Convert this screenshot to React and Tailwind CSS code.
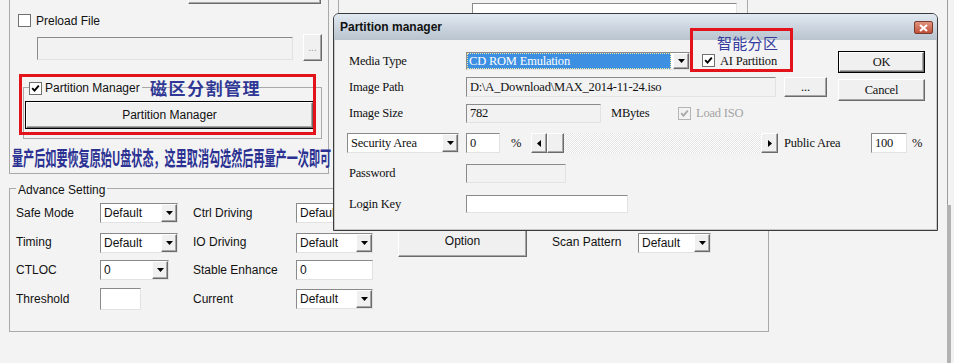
import React from "react";

const raised =
  "border border-t-white border-l-white border-r-[#6b6b6b] border-b-[#6b6b6b] bg-[#f0f0f0] shadow-[inset_-1px_-1px_0_#a6a6a6]";
const sunken =
  "border border-t-[#8a8a8a] border-l-[#8a8a8a] border-r-[#e2e2e2] border-b-[#e2e2e2]";

function Check({ checked, disabled }) {
  return (
    <span
      className={`inline-flex w-[13px] h-[13px] shrink-0 items-center justify-center border ${
        disabled ? "border-[#b4b4b4] bg-[#f3f3f3]" : "border-[#707070] bg-white"
      }`}
    >
      {checked && (
        <svg width="9" height="9" viewBox="0 0 9 9">
          <path d="M1.2 4.2l2.3 2.4L7.8 1.6" stroke={disabled ? "#a8a8a8" : "#000"} strokeWidth="1.9" fill="none" />
        </svg>
      )}
    </span>
  );
}

function Arrow() {
  return (
    <span className={`w-[16px] h-full flex items-center justify-center ${raised}`}>
      <svg width="7" height="4" viewBox="0 0 7 4">
        <path d="M0 0h7L3.5 4z" fill="#000" />
      </svg>
    </span>
  );
}

function Select({ w, value, serif }) {
  return (
    <div className={`flex h-[20px] ${w} bg-white items-center ${sunken}`}>
      <span className={`flex-1 pl-[3px] whitespace-nowrap overflow-hidden ${serif ? "text-[12.5px]" : "text-[12px]"}`}>{value}</span>
      <Arrow />
    </div>
  );
}

function Box({ w, h, value, dis }) {
  return (
    <div className={`${w} ${h} flex items-center pl-[3px] whitespace-nowrap overflow-hidden ${sunken} ${dis ? "bg-[#f2f2f2]" : "bg-white"}`}>
      {value}
    </div>
  );
}

function Lbl({ children }) {
  return <div className="w-[119px] pl-[2px] shrink-0">{children}</div>;
}

export default function App() {
  return (
    <div className="relative w-[954px] h-[363px] overflow-hidden bg-[#f3f3f3] font-['Liberation_Sans',Arial,sans-serif] text-[12px] text-[#111]">
      <div className="flex h-full">
        <div className="w-[947px] flex flex-col">
          <div className="flex h-[174px] items-start">
            {/* left group */}
            <div className="ml-[9px] w-[320px] h-[174px] border-x border-b border-[#a9a9a9] flex flex-col">
              <div className="-mt-[18px] h-[22px] flex items-center">
                <div className="w-[178px] pl-[8px] flex items-center gap-[5px]">
                  <Check />
                  <span>Disk Type (Default)</span>
                </div>
                <div className={`w-[133px] h-[22px] ${raised}`} />
              </div>
              <div className="mt-[10px] h-[13px] pl-[8px] flex items-center gap-[5px]">
                <Check />
                <span>Preload File</span>
              </div>
              <div className="mt-[7px] flex items-start">
                <div className={`ml-[27px] mt-[3px] w-[256px] h-[23px] bg-[#f2f2f2] ${sunken}`} />
                <div className={`ml-[10px] w-[19px] h-[27px] flex items-center justify-center text-[#9a9a9a] text-[10px] ${raised}`}>...</div>
              </div>
              <div className="mt-[26px] ml-[13px] w-[299px] h-[52px] border border-[#a9a9a9] relative">
                <div className="absolute -top-[9px] left-[5px] bg-[#f3f3f3] flex items-center gap-[3px] pr-[2px]">
                  <Check checked />
                  <span>Partition Manager</span>
                </div>
                <div className="ml-[1px] mt-[13px] w-[289px] h-[28px] border border-black">
                  <div className={`h-full flex items-center justify-center ${raised}`}>Partition Manager</div>
                </div>
              </div>
              <div className="mt-[9px] ml-[2px] h-[20px] whitespace-nowrap origin-left scale-x-[0.555] text-[20px] leading-[20px] font-['Noto_Sans_CJK_SC',sans-serif] font-bold text-[#2b3192]">
                量产后如要恢复原始U盘状态，这里取消勾选然后再量产一次即可
              </div>
            </div>
            {/* right group (under dialog) */}
            <div className="ml-[9px] w-[410px] h-[174px] border-x border-[#a9a9a9]">
              <div className={`ml-[133px] mt-[3px] w-[265px] h-[24px] bg-white pl-[4px] pt-[5px] text-[13px] ${sunken}`}>Innostor Technology Corp</div>
            </div>
          </div>

          {/* advance setting */}
          <div className="mt-[14px] ml-[9px] w-[760px] h-[144px] border border-[#a9a9a9] relative">
            <div className="absolute -top-[8px] left-[6px] bg-[#f3f3f3] px-[2px]">Advance Setting</div>
            <div className="pt-[14px] pl-[6px] flex flex-col">
              <div className="h-[20px] flex items-center">
                <div className="w-[84px]">Safe Mode</div>
                <div className="w-[93px]"><Select w="w-[78px]" value="Default" /></div>
                <div className="w-[103px]">Ctrl Driving</div>
                <Select w="w-[77px]" value="Default" />
              </div>
              <div className="mt-[10px] h-[20px] flex items-center">
                <div className="w-[84px] -mt-[2px]">Timing</div>
                <div className="w-[93px]"><Select w="w-[78px]" value="Default" /></div>
                <div className="w-[103px] -mt-[2px]">IO Driving</div>
                <Select w="w-[77px]" value="Default" />
                <div className={`ml-[25px] w-[129px] h-[31px] -mt-[4px] flex items-center justify-center ${raised}`}>Option</div>
                <div className="ml-[25px] w-[86px] -mt-[2px]">Scan Pattern</div>
                <Select w="w-[73px]" value="Default" />
              </div>
              <div className="mt-[7px] h-[20px] flex items-center">
                <div className="w-[84px]">CTLOC</div>
                <div className="w-[93px]"><Select w="w-[69px]" value="0" /></div>
                <div className="w-[103px]">Stable Enhance</div>
                <Box w="w-[77px]" h="h-[20px]" value="0" />
              </div>
              <div className="mt-[8px] h-[22px] flex items-center">
                <div className="w-[84px]">Threshold</div>
                <div className="w-[93px]"><Box w="w-[41px]" h="h-[22px]" value="" /></div>
                <div className="w-[103px]">Current</div>
                <Select w="w-[77px]" value="Default" />
              </div>
            </div>
          </div>
        </div>
        <div className="w-[7px] flex flex-col">
          <div className="h-[205px] border-l border-[#9c9c9c]" />
          <div className="flex-1 border-l-[4px] border-[#b2b2b2]" />
        </div>
      </div>

      {/* annotation on left */}
      <div className="absolute left-[19px] top-[74px] w-[297px] h-[61px] border-[3px] border-[#e3131b]" />
      <div className="absolute left-[150px] top-[78px] leading-[20px] text-[17px] tracking-[1.5px] font-['Noto_Sans_CJK_SC',sans-serif] font-bold text-[#2f3894]">
        磁区分割管理
      </div>

      {/* dialog */}
      <div className="absolute left-[333px] top-[13px] w-[605px] h-[218px] flex flex-col rounded-t-[6px] border border-[#3a3a3a] bg-[#f3f3f3] font-['Liberation_Serif',serif] text-[12.5px] tracking-[-0.2px]">
        <div className="h-[26px] shrink-0 rounded-t-[5px] bg-linear-to-b from-[#e1e9f2] to-[#b8c3ce] flex items-center pl-[6px] pr-[4px]">
          <span className="font-['Liberation_Sans',Arial,sans-serif] font-bold text-[12px] tracking-normal">Partition manager</span>
          <span className="ml-auto mt-[1px] w-[19px] h-[13px] rounded-[2px] border border-[#7a3a2c] bg-linear-to-b from-[#e0937e] to-[#c0503a] flex items-center justify-center">
            <svg width="9" height="8" viewBox="0 0 9 8">
              <path d="M1 1l7 6M8 1L1 7" stroke="#fff" strokeWidth="2" />
            </svg>
          </span>
        </div>
        <div className="flex-1 border-b border-x border-[#c9c9c9] pl-[12px] pt-[11px] flex flex-col">
          <div className="flex">
            <div className="w-[480px] flex flex-col">
              <div className="mt-[1px] h-[18px] flex items-center">
                <Lbl>Media Type</Lbl>
                <div className={`w-[224px] h-[18px] flex items-center bg-white ${sunken}`}>
                  <div className="flex-1 h-full mr-[2px] bg-[#3d8fe2] outline-1 outline-dotted outline-[#f6e9a0] -outline-offset-1 text-white pl-[2px] flex items-center">
                    CD ROM Emulation
                  </div>
                  <Arrow />
                </div>
                <div className="ml-[12px]"><Check checked /></div>
                <span className="ml-[5px]">AI Partition</span>
              </div>
              <div className="mt-[7px] h-[20px] flex items-center">
                <Lbl>Image Path</Lbl>
                <Box w="w-[310px]" h="h-[20px]" value="D:\A_Download\MAX_2014-11-24.iso" dis />
                <div className={`ml-[8px] w-[43px] h-[20px] flex items-center justify-center ${raised}`}>...</div>
              </div>
              <div className="mt-[7px] h-[19px] flex items-center">
                <Lbl>Image Size</Lbl>
                <Box w="w-[135px]" h="h-[19px]" value="782" dis />
                <span className="ml-[10px] w-[67px]">MBytes</span>
                <Check checked disabled />
                <span className="ml-[5px] text-[#a3a3a3]">Load ISO</span>
              </div>
            </div>
            <div className="ml-[11px] w-[87px] flex flex-col">
              <div className="h-[22px] border border-black">
                <div className={`h-full flex items-center justify-center ${raised}`}>OK</div>
              </div>
              <div className={`mt-[6px] h-[22px] flex items-center justify-center ${raised}`}>Cancel</div>
            </div>
          </div>
          <div className="mt-[10px] h-[20px] flex items-center">
            <Select w="w-[112px]" value="Security Area" serif />
            <div className="ml-[7px]"><Box w="w-[34px]" h="h-[20px]" value="0" /></div>
            <span className="w-[31px] pl-[11px]">%</span>
            <div className="w-[247px] h-[20px] flex">
              <div className={`w-[16px] flex items-center justify-center ${raised}`}>
                <svg width="4" height="7" viewBox="0 0 4 7"><path d="M4 0v7L0 3.5z" fill="#000" /></svg>
              </div>
              <div className={`w-[17px] ${raised}`} />
              <div className="flex-1 bg-[repeating-conic-gradient(#ffffff_0_25%,#e4e4e4_0_50%)] bg-[length:2px_2px]" />
              <div className={`w-[17px] flex items-center justify-center ${raised}`}>
                <svg width="4" height="7" viewBox="0 0 4 7"><path d="M0 0v7L4 3.5z" fill="#000" /></svg>
              </div>
            </div>
            <span className="w-[93px] pl-[6px]">Public Area</span>
            <Box w="w-[36px]" h="h-[20px]" value="100" />
            <span className="ml-[5px]">%</span>
          </div>
          <div className="mt-[11px] h-[19px] flex items-center">
            <Lbl>Password</Lbl>
            <Box w="w-[100px]" h="h-[19px]" value="" dis />
          </div>
          <div className="mt-[12px] h-[18px] flex items-center">
            <Lbl>Login Key</Lbl>
            <Box w="w-[162px]" h="h-[18px]" value="" />
          </div>
        </div>
        <div className="absolute left-[356px] top-[14px] w-[103px] h-[44px] border-[3px] border-[#e3131b]" />
        <div className="absolute left-[383px] top-[20px] leading-[18px] text-[15px] tracking-[0.3px] font-['Noto_Sans_CJK_SC',sans-serif] text-[#343c9e]">
          智能分区
        </div>
      </div>
    </div>
  );
}
